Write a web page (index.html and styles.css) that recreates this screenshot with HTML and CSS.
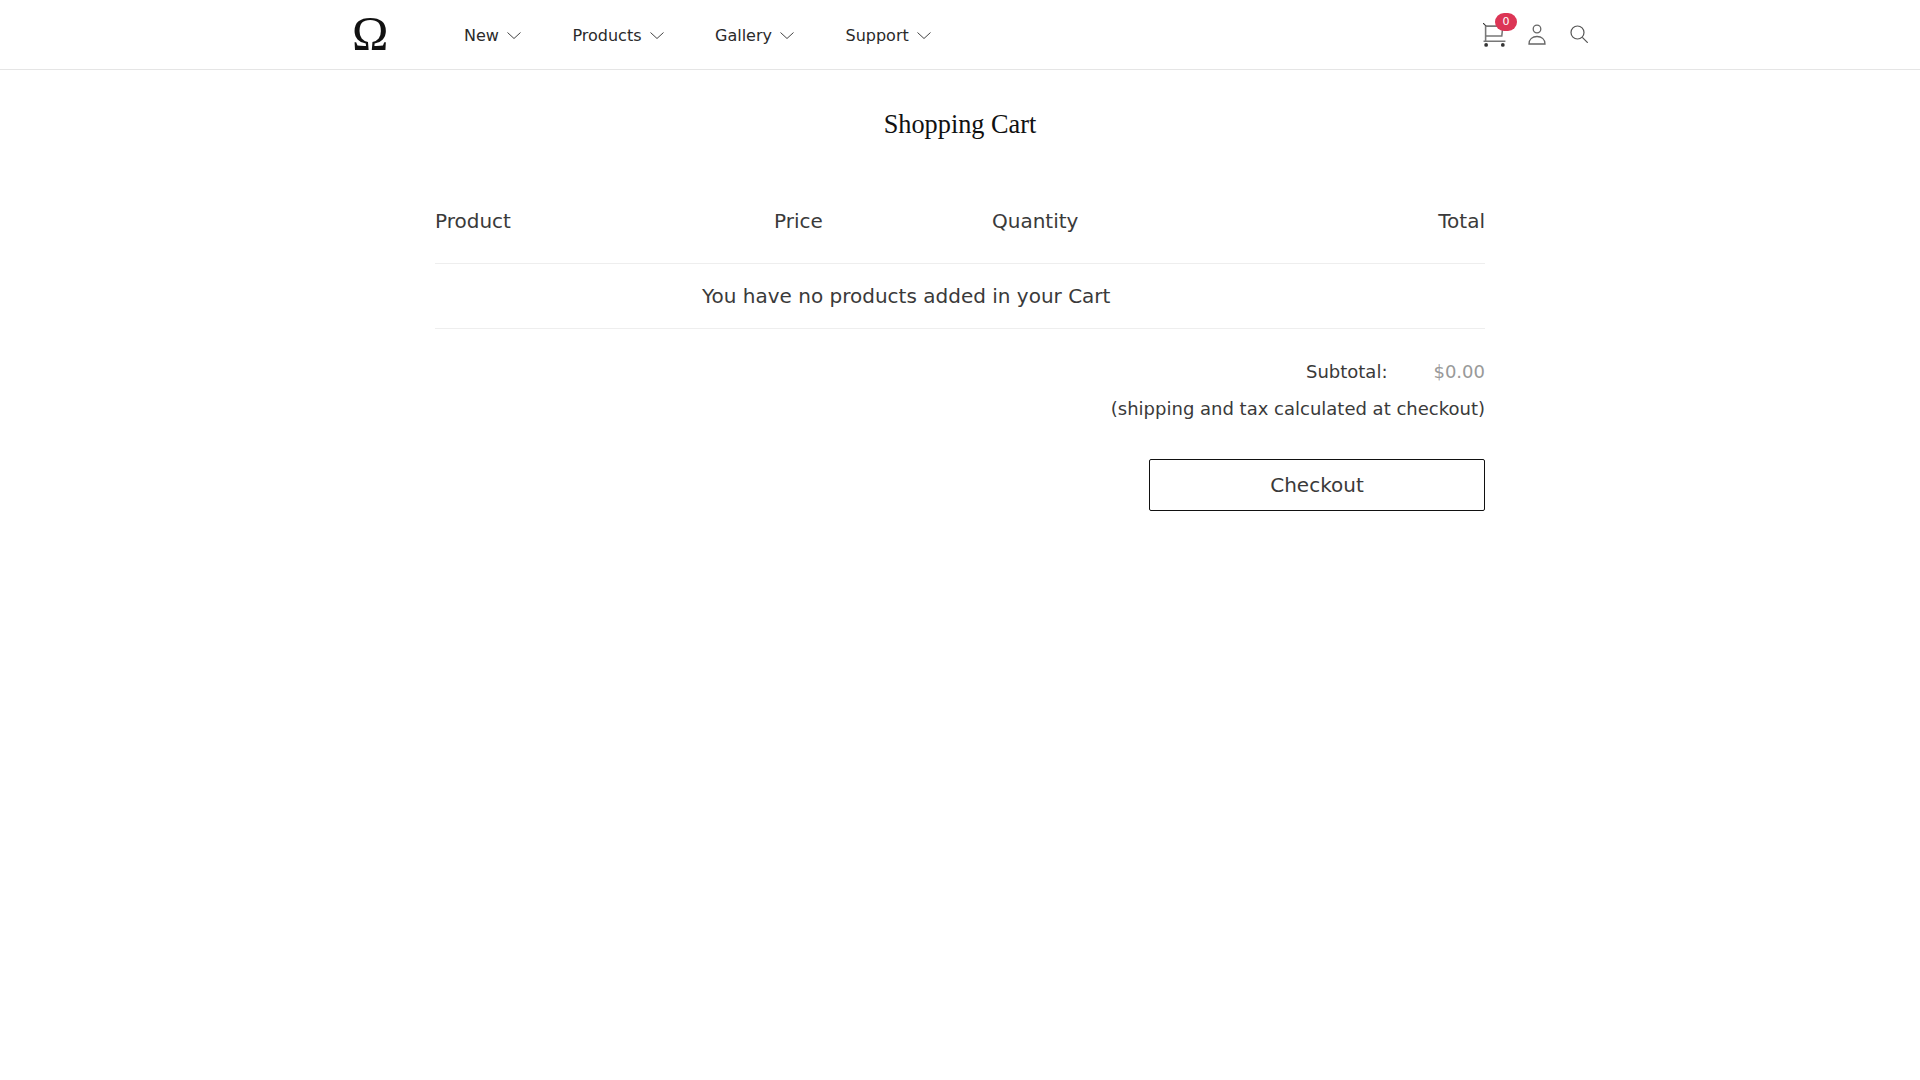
FILE: index.html
```html
<!DOCTYPE html>
<html lang="en">
<head>
<meta charset="utf-8">
<title>Shopping Cart</title>
<link rel="stylesheet" href="styles.css">
</head>
<body>
<header class="site-header">
  <div class="header-inner">
    <a class="logo">Ω</a>
    <nav class="nav">
      <a class="nav-item">New <svg class="chev" viewBox="0 0 14 7"><path d="M0.500 0.500l6.500 6 6.500-6"/></svg></a>
      <a class="nav-item">Products <svg class="chev" viewBox="0 0 14 7"><path d="M0.500 0.500l6.500 6 6.500-6"/></svg></a>
      <a class="nav-item">Gallery <svg class="chev" viewBox="0 0 14 7"><path d="M0.500 0.500l6.500 6 6.500-6"/></svg></a>
      <a class="nav-item">Support <svg class="chev" viewBox="0 0 14 7"><path d="M0.500 0.500l6.500 6 6.500-6"/></svg></a>
    </nav>
    <div class="tools">
      <a class="tool cart">
        <svg class="icon-cart" viewBox="0 0 23 23"><path class="thin" d="M0 0l3 3"/><path d="M2.500 2.800v14.700M2.500 3h16.500l-1 9.500h-15.500M0.500 17.500h21"/><circle cx="3" cy="21" r="1.800" class="solid"/><circle cx="19" cy="21" r="1.800" class="solid"/></svg>
        <span class="badge">0</span>
      </a>
      <a class="tool"><svg class="icon-user" viewBox="0 0 18 21"><circle cx="9" cy="5" r="3.800"/><path d="M1 20c0-5 3.500-7.500 8-7.500s8 2.500 8 7.500z"/></svg></a>
      <a class="tool tool-search"><svg class="icon-search" viewBox="0 0 18 18"><circle cx="7.500" cy="7.500" r="6.500"/><path d="M12.300 12.300l5.500 5.500"/></svg></a>
    </div>
  </div>
</header>
<main class="page">
  <h1 class="title">Shopping Cart</h1>
  <div class="cart-head">
    <div class="col-product">Product</div>
    <div class="col-price">Price</div>
    <div class="col-qty">Quantity</div>
    <div class="col-total">Total</div>
  </div>
  <div class="empty"><span>You have no products added in your Cart</span></div>
  <div class="summary">
    <div class="sub-row"><span>Subtotal:</span><span class="amount">$0.00</span></div>
    <div class="note">(shipping and tax calculated at checkout)</div>
    <a class="checkout">Checkout</a>
  </div>
</main>
</body>
</html>
```
FILE: styles.css
```css
* { box-sizing: border-box; }
html, body { margin: 0; padding: 0; background: #fff; }
body { font-family: "DejaVu Sans", sans-serif; color: #3a3a3a; }
.site-header { height: 70px; border-bottom: 1px solid #e5e5e5; }
.header-inner { width: 1260px; height: 69px; margin: 0 auto; display: flex; align-items: center; }
.logo { font-family: "Liberation Serif", serif; font-size: 49px; line-height: 1; color: #111; width: 124px; padding-left: 22px; flex: none; margin-top: -3px; }
.nav { display: flex; gap: 51.500px; flex: 1; padding-left: 10px; padding-top: 2px; }
.nav-item { display: flex; align-items: center; gap: 8px; font-size: 16px; color: #2a2a2a; }
.chev { width: 14px; height: 7px; fill: none; stroke: #444; stroke-width: 1; }
.tools { display: flex; align-items: center; gap: 21px; padding-right: 2px; margin-top: -1px; }
.tool { display: flex; position: relative; }
.tool-search { margin-left: 3px; }
.icon-cart { width: 24px; height: 24px; fill: none; stroke: #777; stroke-width: 1.500; margin-top: 2px; }
.icon-cart .solid { fill: #333; stroke: none; }
.icon-cart .thin { stroke: #333; stroke-width: 1; }
.icon-user { width: 18px; height: 21px; fill: none; stroke: #666; stroke-width: 1.300; }
.icon-search { width: 18px; height: 18px; fill: none; stroke: #555; stroke-width: 1.200; }
.badge { position: absolute; left: 12px; top: -8px; width: 22px; height: 18px; border-radius: 9px; background: #dc3555; color: #fff; font-size: 11px; line-height: 18px; text-align: center; }
.page { width: 1050px; margin: 0 auto; }
.title { margin: 0; padding-top: 39px; text-align: center; font-family: "Liberation Serif", serif; font-weight: 400; font-size: 26.300px; line-height: 32px; color: #111; }
.cart-head { display: flex; margin-top: 50px; height: 73px; border-bottom: 1px solid #eee; font-size: 20px; line-height: 24px; padding-top: 18px; }
.col-product { width: 339px; }
.col-price { width: 218px; }
.col-qty { flex: 1; }
.empty { height: 65px; border-bottom: 1px solid #eee; font-size: 20px; line-height: 64px; padding-left: 267px; }
.summary { display: flex; flex-direction: column; align-items: flex-end; font-size: 18px; }
.sub-row { display: flex; gap: 46px; margin-top: 31px; line-height: 24px; }
.amount { color: #999; }
.note { margin-top: 13px; line-height: 24px; }
.checkout { display: block; width: 336px; height: 52px; margin-top: 38px; border: 1px solid #111; border-radius: 2px; text-align: center; line-height: 50px; font-size: 20px; }
```
